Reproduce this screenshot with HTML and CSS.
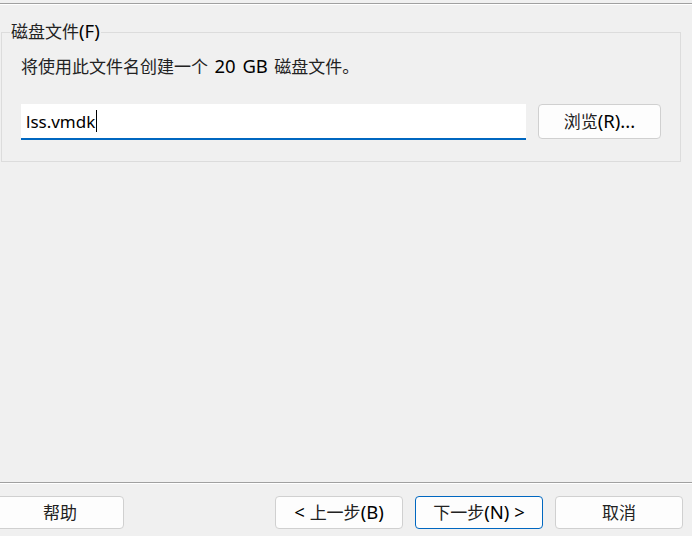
FILE: index.html
```html
<!DOCTYPE html>
<html lang="zh-CN">
<head>
<meta charset="utf-8">
<title>磁盘文件</title>
<link rel="stylesheet" href="styles.css">
</head>
<body>
<div class="page">
  <div class="topline"></div>
  <main class="main">
    <fieldset class="group">
      <legend class="legend">磁盘文件<span class="lat">(F)</span></legend>
      <p class="desc">将使用此文件名创建一个 <span class="lat">20 GB</span> 磁盘文件。</p>
      <div class="row">
        <div class="field"><span class="value">lss.vmdk</span><span class="caret"></span></div>
        <button class="btn browse">浏览<span class="lat">(R)...</span></button>
      </div>
    </fieldset>
  </main>
  <footer class="footer">
    <button class="btn help">帮助</button>
    <div class="spacer"></div>
    <button class="btn"><span class="lat">&lt; </span>上一步<span class="lat">(B)</span></button>
    <button class="btn primary">下一步<span class="lat">(N) &gt;</span></button>
    <button class="btn">取消</button>
  </footer>
</div>
</body>
</html>
```
FILE: styles.css
```css
* { box-sizing: border-box; }
html, body {
  margin: 0;
  padding: 0;
  background: #f0f0f0;
}
body {
  font-family: "Noto Sans", "Noto Sans CJK SC", sans-serif;
  font-size: 17px;
  color: #222;
  overflow: hidden;
}
.lat {
  font-size: 18.5px;
  line-height: 1;
  color: #000;
}
.page {
  width: 692px;
  height: 536px;
  display: flex;
  flex-direction: column;
}
.topline {
  margin-top: 3px;
  height: 2px;
  border-top: 1px solid #a0a0a0;
  border-bottom: 1px solid #ffffff;
}
.main {
  flex: 1;
}
.group {
  margin: 17px 0 0 1px;
  width: 680px;
  padding: 0 0 21px 0;
  border: 1px solid #dcdcdc;
  min-width: 0;
}
.legend {
  margin-left: 8px;
  padding: 0 1px;
  line-height: 20px;
  height: 20px;
}
.desc {
  margin: 15px 0 0 19px;
  line-height: 20px;
  height: 20px;
  word-spacing: 2px;
}
.row {
  margin: 27px 0 0 19px;
  display: flex;
  align-items: flex-start;
  gap: 12px;
}
.field {
  width: 505px;
  height: 36px;
  background: #ffffff;
  border-bottom: 2px solid #0067c0;
  padding: 0 0 0 5px;
  display: flex;
  align-items: center;
  font-size: 17px;
  color: #000;
}
.caret {
  width: 1px;
  height: 22px;
  background: #000;
  margin-left: 1px;
}
.btn {
  font-family: "Noto Sans", "Noto Sans CJK SC", sans-serif;
  font-size: 17px;
  color: #222;
  background: #fdfdfd;
  border: 1px solid #d0d0d0;
  border-radius: 4px;
  width: 128px;
  height: 33px;
  padding: 0;
  line-height: 20px;
}
.browse {
  width: 123px;
  height: 35px;
}
.footer {
  height: 54px;
  border-top: 1px solid #a0a0a0;
  box-shadow: inset 0 1px 0 #ffffff;
  padding: 13px 9px 7px 0;
  display: flex;
  gap: 12px;
}
.help {
  margin-left: -4px;
}
.spacer {
  flex: 1;
}
.primary {
  border-color: #0067c0;
}
```
